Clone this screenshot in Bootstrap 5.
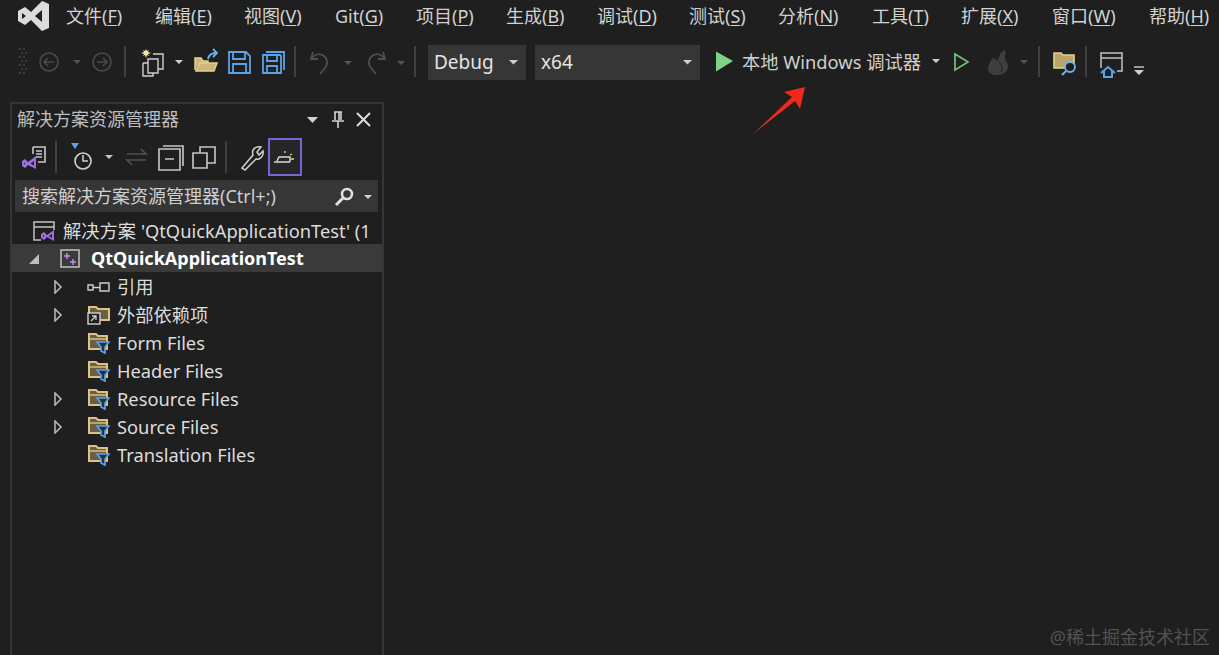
<!DOCTYPE html>
<html lang="zh-CN">
<head>
<meta charset="utf-8">
<title>Visual Studio</title>
<link href="https://cdn.jsdelivr.net/npm/bootstrap@5.3.0/dist/css/bootstrap.min.css" rel="stylesheet">
<style>
html,body{height:100%;overflow:hidden}
body{background:#1f1f1f;color:#d6d6d6;font-family:"Noto Sans","Noto Sans CJK SC",sans-serif;font-size:18px;line-height:1.2}
svg{display:block;flex:none}
.shell{height:655px;position:relative}
.menu-row{height:34px;padding-left:18px}
.menu-logo{width:48px}
.menu-entry{color:#d2d2d2;font-size:18px;white-space:nowrap;flex:none}
.menu-entry u{text-underline-offset:2px;text-decoration-thickness:1px}
.w-a{width:89px}.w-b{width:91px}.w-c{width:81px}.w-d{width:90px}.w-e{width:92px}.w-g{width:94px}.w-h{width:97px}
.tool-row{height:36px;margin-top:10px;padding-left:16px}
.combo{height:35px;background:#363636;color:#e4e4e4;font-size:19px;padding:0 6px;flex:none}
.combo-debug{width:98px;margin-left:8px}
.combo-arch{width:165px;margin-left:9px}
.run-label{width:188px;margin-left:4px;font-size:18.3px;color:#cfcfcf;white-space:nowrap;flex:none}
.pane{width:374px;height:553px;margin:22px 0 0 10px;border:2px solid #363636;border-bottom:0}
.pane-title{height:34px;padding:0 8px 2px 5px;color:#bdbdbd;font-size:18px}
.pane-tools{height:38px;padding-left:4px}
.pane-search{height:32px;margin:4px 4px 4px 3px;background:#363636;color:#cfcfcf;padding:1px 4px 0 7px;font-size:18px}
.tree-line{height:28px;padding-top:2px;white-space:nowrap;overflow:hidden;color:#dcdcdc;font-size:18.3px}
.tree-sel{background:#3a3a3a;color:#fff;font-weight:700;font-size:18px}
.lvl-0{padding-left:21px}
.lvl-1{padding-left:15px}
.lvl-2{padding-left:41px}
.arrow-gap{width:24px;flex:none}
.open-gap{width:19px;flex:none}
.plain-gap{width:34px;flex:none}
.tree-text{margin-left:7px}
.tree-text-root{margin-left:8px}
.tree-text-proj{margin-left:11px}
.mark-arrow{position:absolute;left:750px;top:84px}
.watermark{position:absolute;right:9px;bottom:6px;color:#525252;font-size:18px;white-space:nowrap}
</style>
</head>
<body>
<div class="shell">

<svg width="0" height="0" class="position-absolute"><defs>
  <symbol id="filter-folder" viewBox="0 0 23 22"><path d="M2 17V2H9L11 4H20V17Z" fill="#6a5f42" stroke="#dcc487" stroke-width="2"/><path d="M3 7H19" stroke="#dcc487" stroke-width="1.4"/><path d="M10 10H22L18 15V21L14 19V15Z" fill="#24303a" stroke="#5aa3e6" stroke-width="1.7"/></symbol>
  <symbol id="tree-caret" viewBox="0 0 10 14"><path d="M2 1 8 7 2 13Z" fill="none" stroke="#bdbdbd" stroke-width="1.5"/></symbol>
</defs></svg>

<div class="menu-row d-flex align-items-center">
  <svg class="menu-logo" width="48" height="32" viewBox="0 0 48 32"><path d="M0 10 7 6 13 11 24 0 31 3V27L24 30 13 19 7 24 0 20Z" fill="#dcdcdc"/><path d="M4 12V18L8 15Z M24 9V21L17 15Z" fill="#1f1f1f"/></svg>
  <div class="menu-entry w-a">文件(<u>F</u>)</div>
  <div class="menu-entry w-a">编辑(<u>E</u>)</div>
  <div class="menu-entry w-b">视图(<u>V</u>)</div>
  <div class="menu-entry w-c">Git(<u>G</u>)</div>
  <div class="menu-entry w-d">项目(<u>P</u>)</div>
  <div class="menu-entry w-b">生成(<u>B</u>)</div>
  <div class="menu-entry w-e">调试(<u>D</u>)</div>
  <div class="menu-entry w-a">测试(<u>S</u>)</div>
  <div class="menu-entry w-g">分析(<u>N</u>)</div>
  <div class="menu-entry w-a">工具(<u>T</u>)</div>
  <div class="menu-entry w-b">扩展(<u>X</u>)</div>
  <div class="menu-entry w-h">窗口(<u>W</u>)</div>
  <div class="menu-entry">帮助(<u>H</u>)</div>
</div>

<div class="tool-row d-flex align-items-center">
  <svg width="16" height="36" viewBox="0 0 16 36"><g fill="#3c3c3c"><path d="M3 4h2v2H3zM7 4h2v2H7zM5 8h2v2H5zM9 8h2v2H9zM3 12h2v2H3zM7 12h2v2H7zM5 16h2v2H5zM9 16h2v2H9zM3 20h2v2H3zM7 20h2v2H7zM5 24h2v2H5zM9 24h2v2H9zM3 28h2v2H3zM7 28h2v2H7z"/></g></svg>
  <svg width="36" height="36" viewBox="0 0 36 36"><g fill="none" stroke="#4a4a4a" stroke-width="1.6"><circle cx="17" cy="18" r="9"/><path d="M22 18H12M16 14l-4 4 4 4"/></g></svg>
  <svg width="18" height="36" viewBox="0 0 18 36"><path d="M5 16h8l-4 4z" fill="#555"/></svg>
  <svg width="32" height="36" viewBox="0 0 32 36"><g fill="none" stroke="#4a4a4a" stroke-width="1.6"><circle cx="16" cy="18" r="9"/><path d="M11 18H21M17 14l4 4-4 4"/></g></svg>
  <svg width="14" height="36" viewBox="0 0 14 36"><path d="M7 2V33" stroke="#404040" stroke-width="2"/></svg>
  <svg width="38" height="36" viewBox="0 0 38 36"><g fill="none" stroke="#cfcfcf" stroke-width="1.4"><path d="M21 10H31V25H26M16 15H26V29H16zM11 19H16M11 19V32H21V29"/></g><path d="M13 7 14 5 15 7 17 6 16 8 19 9 16 10 17 12 15 11 14 14 13 11 11 12 12 10 9 9 12 8 11 6Z" fill="#f2e6a8"/></svg>
  <svg width="18" height="36" viewBox="0 0 18 36"><path d="M5 16h8l-4 4z" fill="#d2d2d2"/></svg>
  <svg width="34" height="36" viewBox="0 0 34 36"><path d="M7 26V14H13L15 17H20V19H12L8 27H26L29 19H12" fill="#cdb679" stroke="#e6cf8c" stroke-width="1.5"/><path d="M20 15C21 10 24 9 28 9M25 5l4 4-4 4" fill="none" stroke="#6cb2ee" stroke-width="1.8"/></svg>
  <svg width="34" height="36" viewBox="0 0 34 36"><g fill="none" stroke="#5aa3e6" stroke-width="1.8"><path d="M7 8H24L28 12V29H7zM11 8V15H23V8M11 29V20H24V29"/></g></svg>
  <svg width="34" height="36" viewBox="0 0 34 36"><g fill="none" stroke="#5aa3e6" stroke-width="1.8"><path d="M7 11H24L25 12V29H7zM11 11V17H21V11M11 29V22H21V29M10 8H28V26"/></g></svg>
  <svg width="10" height="36" viewBox="0 0 10 36"><path d="M5 2V33" stroke="#404040" stroke-width="2"/></svg>
  <svg width="38" height="36" viewBox="0 0 38 36"><path d="M13 8 11 15 18 15M11 15C15 10 20 9 24 12 28 15 28 20 25 24L20 30" fill="none" stroke="#505050" stroke-width="1.8"/></svg>
  <svg width="20" height="36" viewBox="0 0 20 36"><path d="M6 17h8l-4 4z" fill="#555"/></svg>
  <svg width="34" height="36" viewBox="0 0 34 36"><path d="M25 8 27 15 20 15M27 15C23 10 18 9 14 12 10 15 10 20 13 24L18 30" fill="none" stroke="#505050" stroke-width="1.8"/></svg>
  <svg width="18" height="36" viewBox="0 0 18 36"><path d="M5 17h8l-4 4z" fill="#555"/></svg>
  <svg width="10" height="36" viewBox="0 0 10 36"><path d="M5 2V33" stroke="#404040" stroke-width="2"/></svg>
  <div class="combo combo-debug d-flex align-items-center justify-content-between"><span>Debug</span><svg width="12" height="12" viewBox="0 0 12 12"><path d="M1 4h9L5.500 8.500z" fill="#cfcfcf"/></svg></div>
  <div class="combo combo-arch d-flex align-items-center justify-content-between"><span>x64</span><svg width="12" height="12" viewBox="0 0 12 12"><path d="M1 4h9L5.500 8.500z" fill="#cfcfcf"/></svg></div>
  <svg width="38" height="36" viewBox="0 0 38 36"><path d="M16 7.500 33 17 16 27.500Z" fill="#7fd387"/></svg>
  <div class="run-label">本地 Windows 调试器</div>
  <svg width="12" height="36" viewBox="0 0 12 36"><path d="M2 15h8l-4 4z" fill="#d2d2d2"/></svg>
  <svg width="36" height="36" viewBox="0 0 36 36"><path d="M13 10 26 18 13 26Z" fill="none" stroke="#72c07a" stroke-width="1.7"/></svg>
  <svg width="38" height="36" viewBox="0 0 38 36"><path d="M27 6C20 9 22 14 19 17 18 15 17 14 15 14 12 18 10 21 10 25 10 29 14 31 19 31 26 31 30 27 30 22 30 18 27 18 27 14 27 11 28 8 27 6Z" fill="#3f3f3f"/><path d="M21 18C24 21 26 24 23 28" fill="none" stroke="#2a2a2a" stroke-width="1.4"/></svg>
  <svg width="16" height="36" viewBox="0 0 16 36"><path d="M4 16h8l-4 4z" fill="#555"/></svg>
  <svg width="14" height="36" viewBox="0 0 14 36"><path d="M7 2V33" stroke="#404040" stroke-width="2"/></svg>
  <svg width="36" height="36" viewBox="0 0 36 36"><path d="M8 9H15L17 11H28V24H8Z" fill="#b8a36c" stroke="#e6cf8c" stroke-width="1.6"/><circle cx="24" cy="23" r="5" fill="#1f1f1f" stroke="#6cb2ee" stroke-width="1.8"/><path d="M20 27 16 31" stroke="#6cb2ee" stroke-width="2.2"/></svg>
  <svg width="8" height="36" viewBox="0 0 8 36"><path d="M4 2V33" stroke="#404040" stroke-width="2"/></svg>
  <svg width="38" height="36" viewBox="0 0 38 36"><path d="M11 24V9H32V27H27M11 14H32" fill="none" stroke="#c4c4c4" stroke-width="1.5"/><path d="M11 29 18 23 25 29M14 27V33H22V27" fill="none" stroke="#5aa3e6" stroke-width="2"/></svg>
  <svg width="22" height="36" viewBox="0 0 22 36"><path d="M6 23H16" stroke="#d0d0d0" stroke-width="1.4"/><path d="M6 26h10l-5 5z" fill="#d0d0d0"/></svg>
</div>

<div class="pane">
  <div class="pane-title d-flex align-items-center justify-content-between">
    <span>解决方案资源管理器</span>
    <div class="d-flex align-items-center">
      <svg width="14" height="16" viewBox="0 0 14 16"><path d="M1 5h11L6.500 11z" fill="#d2d2d2"/></svg>
      <svg class="ms-2" width="20" height="20" viewBox="0 0 20 20"><path d="M6 2H14M7 2V10M13 2V10M4 11H16M10 11V18M11 2V10" fill="none" stroke="#d2d2d2" stroke-width="1.6"/></svg>
      <svg class="ms-1" width="22" height="20" viewBox="0 0 22 20"><path d="M5 3 18 16M18 3 5 16" stroke="#dcdcdc" stroke-width="2"/></svg>
    </div>
  </div>
  <div class="pane-tools d-flex align-items-center">
    <svg width="34" height="38" viewBox="0 0 34 38"><path d="M17 9H29V24H22M17 9V16" fill="none" stroke="#c8c8c8" stroke-width="1.6"/><path d="M20 13H26M20 16H26M20 19H26" stroke="#c8c8c8" stroke-width="1.5"/><path d="M6 23 9 21 12 24 20 18V31L12 27 9 30 6 28ZM8 24.500V26.500L9.500 25.500ZM18 23 14.500 25.500 18 27.500Z" fill="#9a6fe0" fill-rule="evenodd"/></svg>
    <svg width="12" height="38" viewBox="0 0 12 38"><path d="M6 3V35" stroke="#404040" stroke-width="2"/></svg>
    <svg width="38" height="38" viewBox="0 0 38 38"><path d="M9 5h8l-4 6z" fill="#5aa3e6"/><circle cx="21" cy="23" r="8" fill="none" stroke="#d2d2d2" stroke-width="1.6"/><path d="M21 17V23H26" fill="none" stroke="#d2d2d2" stroke-width="1.5"/></svg>
    <svg width="18" height="38" viewBox="0 0 18 38"><path d="M5 17h8l-4 4z" fill="#c8c8c8"/></svg>
    <svg width="36" height="38" viewBox="0 0 36 38"><path d="M9 16H28L23 11M28 22H9L14 27" fill="none" stroke="#505050" stroke-width="1.6"/></svg>
    <svg width="34" height="38" viewBox="0 0 34 38"><path d="M5 11H26V32H5ZM11 21H20M9 8H29V28" fill="none" stroke="#c8c8c8" stroke-width="1.6"/></svg>
    <svg width="32" height="38" viewBox="0 0 32 38"><path d="M5 15H19V30H5ZM12 15V9H27V25H19" fill="none" stroke="#c8c8c8" stroke-width="1.6"/></svg>
    <svg width="12" height="38" viewBox="0 0 12 38"><path d="M6 3V35" stroke="#404040" stroke-width="2"/></svg>
    <svg width="36" height="38" viewBox="0 0 36 38"><path d="M10 30 21 17C19 11 24 8 29 9L25 14 27 17 31 13C32 18 28 22 24 21L13 32Z" fill="#1f1f1f" stroke="#d2d2d2" stroke-width="1.5"/></svg>
    <svg width="34" height="38" viewBox="0 0 34 38"><rect x="1" y="1" width="32" height="36" fill="#262626" stroke="#7a63d8" stroke-width="2"/><path d="M6 24H22M9 23 11 19H22V24" fill="none" stroke="#d8d8d8" stroke-width="1.5"/><path d="M17 13V15M22 17 24 16M23 21H26" stroke="#e8d67a" stroke-width="1.3"/></svg>
  </div>
  <div class="pane-search d-flex align-items-center justify-content-between">
    <span>搜索解决方案资源管理器(Ctrl+;)</span>
    <div class="d-flex align-items-center gap-2">
      <svg width="22" height="22" viewBox="0 0 22 22"><circle cx="14" cy="8" r="5" fill="none" stroke="#e0e0e0" stroke-width="2.6"/><path d="M10 12 3 19" stroke="#e0e0e0" stroke-width="3"/></svg>
      <svg width="11" height="10" viewBox="0 0 11 10"><path d="M1 3h8L5 7z" fill="#d0d0d0"/></svg>
    </div>
  </div>
  <div class="tree-line lvl-0 d-flex align-items-center">
    <svg width="22" height="22" viewBox="0 0 22 22"><path d="M8 20H1V2H21V10M1 7H21" fill="none" stroke="#c4c4c4" stroke-width="1.5"/><path d="M8 14 11 12 14 15 21 10V21L14 17 11 20 8 18ZM10 15V17L11.500 16ZM19 14 16 16 19 18Z" fill="#9a6fe0" fill-rule="evenodd"/></svg>
    <span class="tree-text-root">解决方案 'QtQuickApplicationTest' (1</span>
  </div>
  <div class="tree-line tree-sel lvl-1 d-flex align-items-center">
    <svg width="14" height="14" viewBox="0 0 14 14"><path d="M12 2V12H2Z" fill="#bdbdbd"/></svg>
    <span class="open-gap"></span>
    <svg width="20" height="20" viewBox="0 0 20 20"><rect x="1" y="1" width="18" height="17" fill="none" stroke="#c4c4c4" stroke-width="1.5"/><path d="M4 7H10M7 4V10M10 13H16M13 10V16" stroke="#c58af0" stroke-width="1.5"/></svg>
    <span class="tree-text-proj">QtQuickApplicationTest</span>
  </div>
  <div class="tree-line lvl-2 d-flex align-items-center">
    <svg width="10" height="14"><use href="#tree-caret"/></svg>
    <span class="arrow-gap"></span>
    <svg width="23" height="12" viewBox="0 0 23 12"><path d="M1 4H6V9H1ZM13 2H22V10H13ZM6 6.500H13" fill="none" stroke="#d0d0d0" stroke-width="1.4"/></svg>
    <span class="tree-text">引用</span>
  </div>
  <div class="tree-line lvl-2 d-flex align-items-center">
    <svg width="10" height="14"><use href="#tree-caret"/></svg>
    <span class="arrow-gap"></span>
    <svg width="23" height="20" viewBox="0 0 23 20"><path d="M2 15V2H9L11 4H22V15H13" fill="#6a5f42" stroke="#dcc487" stroke-width="2"/><rect x="1" y="8" width="12" height="11" fill="#1f1f1f" stroke="#d0d0d0" stroke-width="1.4"/><path d="M4 16 9 11M5 11H9V15" fill="none" stroke="#d0d0d0" stroke-width="1.3"/></svg>
    <span class="tree-text">外部依赖项</span>
  </div>
  <div class="tree-line lvl-2 d-flex align-items-center">
    <span class="plain-gap"></span>
    <svg width="23" height="22"><use href="#filter-folder"/></svg>
    <span class="tree-text">Form Files</span>
  </div>
  <div class="tree-line lvl-2 d-flex align-items-center">
    <span class="plain-gap"></span>
    <svg width="23" height="22"><use href="#filter-folder"/></svg>
    <span class="tree-text">Header Files</span>
  </div>
  <div class="tree-line lvl-2 d-flex align-items-center">
    <svg width="10" height="14"><use href="#tree-caret"/></svg>
    <span class="arrow-gap"></span>
    <svg width="23" height="22"><use href="#filter-folder"/></svg>
    <span class="tree-text">Resource Files</span>
  </div>
  <div class="tree-line lvl-2 d-flex align-items-center">
    <svg width="10" height="14"><use href="#tree-caret"/></svg>
    <span class="arrow-gap"></span>
    <svg width="23" height="22"><use href="#filter-folder"/></svg>
    <span class="tree-text">Source Files</span>
  </div>
  <div class="tree-line lvl-2 d-flex align-items-center">
    <span class="plain-gap"></span>
    <svg width="23" height="22"><use href="#filter-folder"/></svg>
    <span class="tree-text">Translation Files</span>
  </div>
</div>

<svg class="mark-arrow" width="58" height="54" viewBox="0 0 58 54"><path d="M3 50 42 13 34 8 55 3 50 25 45 17Z" fill="#ee2a1e"/></svg>
<div class="watermark">@稀土掘金技术社区</div>
</div>
<script src="https://cdn.jsdelivr.net/npm/bootstrap@5.3.0/dist/js/bootstrap.bundle.min.js"></script>
</body>
</html>
